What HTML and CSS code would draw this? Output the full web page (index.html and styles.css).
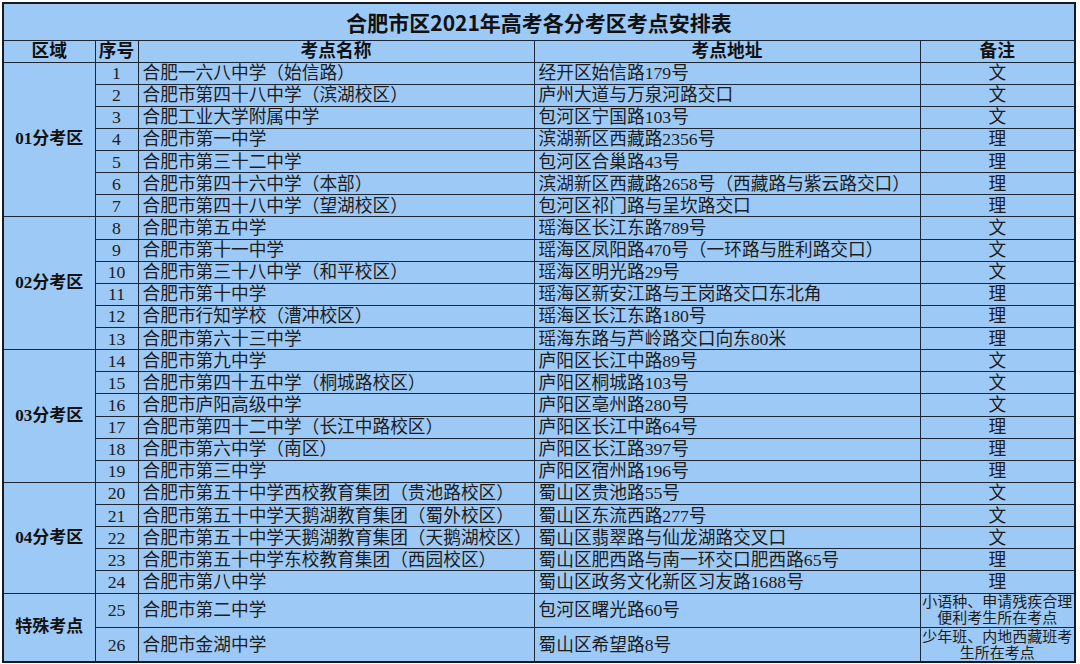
FILE: index.html
```html
<!DOCTYPE html>
<html lang="zh-CN">
<head>
<meta charset="utf-8">
<title>合肥市区2021年高考各分考区考点安排表</title>
<link rel="stylesheet" href="styles.css">
</head>
<body>
<table class="sheet">
  <colgroup>
    <col class="c-zone"><col class="c-no"><col class="c-name"><col class="c-addr"><col class="c-note">
  </colgroup>
  <tr class="r-title"><td colspan="5" class="title">合肥市区2021年高考各分考区考点安排表</td></tr>
  <tr class="r-head">
    <th>区域</th><th>序号</th><th>考点名称</th><th>考点地址</th><th>备注</th>
  </tr>
  <tr class="r"><td class="zone" rowspan="7">01分考区</td><td class="no">1</td><td class="txt">合肥一六八中学（始信路）</td><td class="txt">经开区始信路179号</td><td class="note">文</td></tr>
  <tr class="r"><td class="no">2</td><td class="txt">合肥市第四十八中学（滨湖校区）</td><td class="txt">庐州大道与万泉河路交口</td><td class="note">文</td></tr>
  <tr class="r"><td class="no">3</td><td class="txt">合肥工业大学附属中学</td><td class="txt">包河区宁国路103号</td><td class="note">文</td></tr>
  <tr class="r"><td class="no">4</td><td class="txt">合肥市第一中学</td><td class="txt">滨湖新区西藏路2356号</td><td class="note">理</td></tr>
  <tr class="r"><td class="no">5</td><td class="txt">合肥市第三十二中学</td><td class="txt">包河区合巢路43号</td><td class="note">理</td></tr>
  <tr class="r"><td class="no">6</td><td class="txt">合肥市第四十六中学（本部）</td><td class="txt">滨湖新区西藏路2658号（西藏路与紫云路交口）</td><td class="note">理</td></tr>
  <tr class="r"><td class="no">7</td><td class="txt">合肥市第四十八中学（望湖校区）</td><td class="txt">包河区祁门路与呈坎路交口</td><td class="note">理</td></tr>
  <tr class="r"><td class="zone" rowspan="6">02分考区</td><td class="no">8</td><td class="txt">合肥市第五中学</td><td class="txt">瑶海区长江东路789号</td><td class="note">文</td></tr>
  <tr class="r"><td class="no">9</td><td class="txt">合肥市第十一中学</td><td class="txt">瑶海区凤阳路470号（一环路与胜利路交口）</td><td class="note">文</td></tr>
  <tr class="r"><td class="no">10</td><td class="txt">合肥市第三十八中学（和平校区）</td><td class="txt">瑶海区明光路29号</td><td class="note">文</td></tr>
  <tr class="r"><td class="no">11</td><td class="txt">合肥市第十中学</td><td class="txt">瑶海区新安江路与王岗路交口东北角</td><td class="note">理</td></tr>
  <tr class="r"><td class="no">12</td><td class="txt">合肥市行知学校（漕冲校区）</td><td class="txt">瑶海区长江东路180号</td><td class="note">理</td></tr>
  <tr class="r"><td class="no">13</td><td class="txt">合肥市第六十三中学</td><td class="txt">瑶海东路与芦岭路交口向东80米</td><td class="note">理</td></tr>
  <tr class="r"><td class="zone" rowspan="6">03分考区</td><td class="no">14</td><td class="txt">合肥市第九中学</td><td class="txt">庐阳区长江中路89号</td><td class="note">文</td></tr>
  <tr class="r"><td class="no">15</td><td class="txt">合肥市第四十五中学（桐城路校区）</td><td class="txt">庐阳区桐城路103号</td><td class="note">文</td></tr>
  <tr class="r"><td class="no">16</td><td class="txt">合肥市庐阳高级中学</td><td class="txt">庐阳区亳州路280号</td><td class="note">文</td></tr>
  <tr class="r"><td class="no">17</td><td class="txt">合肥市第四十二中学（长江中路校区）</td><td class="txt">庐阳区长江中路64号</td><td class="note">理</td></tr>
  <tr class="r"><td class="no">18</td><td class="txt">合肥市第六中学（南区）</td><td class="txt">庐阳区长江路397号</td><td class="note">理</td></tr>
  <tr class="r"><td class="no">19</td><td class="txt">合肥市第三中学</td><td class="txt">庐阳区宿州路196号</td><td class="note">理</td></tr>
  <tr class="r"><td class="zone" rowspan="5">04分考区</td><td class="no">20</td><td class="txt">合肥市第五十中学西校教育集团（贵池路校区）</td><td class="txt">蜀山区贵池路55号</td><td class="note">文</td></tr>
  <tr class="r"><td class="no">21</td><td class="txt">合肥市第五十中学天鹅湖教育集团（蜀外校区）</td><td class="txt">蜀山区东流西路277号</td><td class="note">文</td></tr>
  <tr class="r"><td class="no">22</td><td class="txt">合肥市第五十中学天鹅湖教育集团（天鹅湖校区）</td><td class="txt">蜀山区翡翠路与仙龙湖路交叉口</td><td class="note">文</td></tr>
  <tr class="r"><td class="no">23</td><td class="txt">合肥市第五十中学东校教育集团（西园校区）</td><td class="txt">蜀山区肥西路与南一环交口肥西路65号</td><td class="note">理</td></tr>
  <tr class="r"><td class="no">24</td><td class="txt">合肥市第八中学</td><td class="txt">蜀山区政务文化新区习友路1688号</td><td class="note">理</td></tr>
  <tr class="r-tall"><td class="zone" rowspan="2">特殊考点</td><td class="no">25</td><td class="txt">合肥市第二中学</td><td class="txt">包河区曙光路60号</td><td class="note small">小语种、申请残疾合理<br>便利考生所在考点</td></tr>
  <tr class="r-tall"><td class="no">26</td><td class="txt">合肥市金湖中学</td><td class="txt">蜀山区希望路8号</td><td class="note small">少年班、内地西藏班考<br>生所在考点</td></tr>
</table>
</body>
</html>
```

FILE: styles.css
```css
html, body {
  margin: 0;
  padding: 0;
  background: #ffffff;
}

body {
  padding: 2px 0 0 2px;
  width: 1080px;
  height: 664px;
  box-sizing: border-box;
  overflow: hidden;
}

.sheet {
  border-collapse: collapse;
  table-layout: fixed;
  width: 1072px;
  background: #9dc9f6;
  border: 2px solid #161a22;
  font-family: "Liberation Serif", "Noto Sans CJK SC", serif;
  font-size: 17.7px;
  color: #1c1c1c;
}

.c-zone { width: 92px; }
.c-no { width: 43px; }
.c-name { width: 396px; }
.c-addr { width: 386px; }
.c-note { width: 155px; }

.sheet td,
.sheet th {
  border: 1px solid #1f2633;
  padding: 0;
  line-height: 20px;
  white-space: nowrap;
  overflow: hidden;
  vertical-align: middle;
}

.r-title { height: 37px; }
.title {
  text-align: center;
  font-family: "Noto Sans CJK SC", "Noto Sans", sans-serif;
  font-weight: 700;
  font-size: 21px;
  color: #111111;
}

.r-head { height: 22px; }
.r-head th {
  font-weight: 700;
  font-size: 17.7px;
  text-align: center;
  color: #111111;
}

.r { height: 22.125px; }
.r-tall { height: 34.5px; }

.zone {
  text-align: center;
  font-weight: 700;
  font-size: 17px;
  color: #111111;
}

.no {
  text-align: center;
}

.txt {
  text-align: left;
  padding-left: 4px !important;
}

.note {
  text-align: center;
}

.note.small {
  font-size: 15px;
  line-height: 16px !important;
  white-space: nowrap;
}
```
